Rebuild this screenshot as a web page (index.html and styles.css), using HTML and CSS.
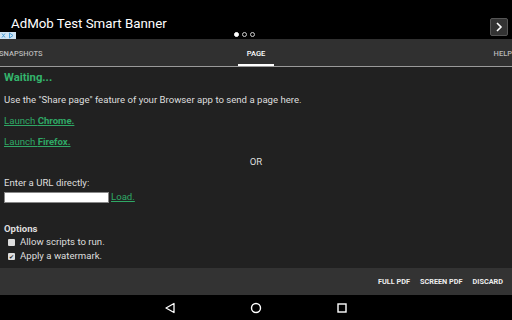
FILE: index.html
```html
<!DOCTYPE html>
<html lang="en">
<head>
  <meta charset="UTF-8">
  <title>Page to PDF</title>
  <link rel="stylesheet" href="styles.css">
</head>
<body>
  <div class="screen">
    <!-- Ad banner -->
    <div class="banner">
      <div class="banner-title">AdMob Test Smart Banner</div>
      <div class="ad-badge">
        <svg width="16" height="7" viewBox="0 0 16 7">
          <rect x="0" y="0" width="16" height="7" fill="#cfe3f3"/>
          <path d="M2 1.5 L5 5.5 M5 1.5 L2 5.5" stroke="#4a9fd8" stroke-width="1"/>
          <path d="M9.5 1 L13 3.5 L9.5 6 Z" fill="none" stroke="#4a9fd8" stroke-width="1"/>
        </svg>
      </div>
      <div class="dots">
        <span class="dot on"></span><span class="dot"></span><span class="dot"></span>
      </div>
      <div class="next-btn">
        <svg width="8" height="10" viewBox="0 0 8 10">
          <path d="M2 1 L6 5 L2 9" fill="none" stroke="#fff" stroke-width="1.6"/>
        </svg>
      </div>
    </div>

    <!-- Tabs -->
    <div class="tabs">
      <div class="tab tab-left">SNAPSHOTS</div>
      <div class="tab active">PAGE</div>
      <div class="tab tab-right">HELP</div>
    </div>

    <!-- Page content -->
    <div class="content">
      <div class="waiting">Waiting...</div>
      <p class="first">Use the "Share page" feature of your Browser app to send a page here.</p>
      <p><a href="#" class="link">Launch <b>Chrome.</b></a></p>
      <p><a href="#" class="link">Launch <b>Firefox.</b></a></p>
      <p class="or">OR</p>
      <div class="url-block">
        <div>Enter a URL directly:</div>
        <div class="url-row">
          <div class="url-input"></div>
          <a href="#" class="link">Load.</a>
        </div>
      </div>
      <div class="options">
        <div class="options-title">Options</div>
        <label class="opt"><span class="box"></span>Allow scripts to run.</label>
        <label class="opt"><span class="box checked">&#10004;</span>Apply a watermark.</label>
      </div>
    </div>

    <!-- Actions -->
    <div class="actions">
      <span class="action">FULL PDF</span>
      <span class="action">SCREEN PDF</span>
      <span class="action">DISCARD</span>
    </div>

    <!-- System nav -->
    <div class="navbar">
      <svg width="12" height="12" viewBox="0 0 12 12"><path d="M10 1.5 L10 10.5 L2 6 Z" fill="none" stroke="#fff" stroke-width="1.3" stroke-linejoin="round"/></svg>
      <svg width="12" height="12" viewBox="0 0 12 12"><circle cx="6" cy="6" r="4.5" fill="none" stroke="#fff" stroke-width="1.4"/></svg>
      <svg width="12" height="12" viewBox="0 0 12 12"><rect x="2" y="2" width="8" height="8" fill="none" stroke="#fff" stroke-width="1.4"/></svg>
    </div>
  </div>
</body>
</html>
```

FILE: styles.css
```css
:root {
  --green: #34b46c;
  --link: #2fa865;
  --text: #dedede;
}

body {
  margin: 0;
  background: #000;
  font-family: Roboto, "Liberation Sans", sans-serif;
  color: var(--text);
}

.screen {
  width: 512px;
  height: 320px;
  display: flex;
  flex-direction: column;
  overflow: hidden;
}

.banner {
  position: relative;
  height: 39px;
  background: #000;
  flex: none;
}

.banner-title {
  position: absolute;
  left: 11px;
  top: 16px;
  font-size: 13.3px;
  line-height: 16px;
  color: #fff;
}

.ad-badge {
  position: absolute;
  left: 0;
  top: 32px;
  line-height: 0;
}

.dots {
  position: absolute;
  left: 234px;
  top: 32px;
  display: flex;
  gap: 3px;
}

.dot {
  width: 3px;
  height: 3px;
  border: 1px solid #ccc;
  border-radius: 50%;
}

.dot.on {
  background: #fff;
  border-color: #fff;
}

.next-btn {
  position: absolute;
  left: 490px;
  top: 18px;
  width: 16px;
  height: 16px;
  background: #333;
  border: 1px solid #555;
  border-radius: 2px;
  display: flex;
  align-items: center;
  justify-content: center;
}

.tabs {
  height: 27px;
  background: #303030;
  border-bottom: 1px solid #9a9a9a;
  flex: none;
  position: relative;
}

.tab {
  font-size: 7.5px;
  line-height: 9px;
  font-weight: 500;
  color: #b8b8b8;
  position: absolute;
  top: 10px;
}

.tab-left { left: -1px; }
.tab-right { right: 0; }

.tab.active {
  color: #fff;
  left: 238px;
  width: 36px;
  text-align: center;
  height: 15px;
  border-bottom: 2px solid #fff;
}

.content {
  flex: 1;
  min-height: 0;
  overflow: hidden;
  background: #212121;
  padding: 4px 4px 0;
  font-size: 9.6px;
}

.waiting {
  color: var(--green);
  font-weight: 700;
  font-size: 11.3px;
  line-height: 13px;
}

p {
  margin: 9px 0 0;
  line-height: 12px;
}

p.first {
  margin-top: 10px;
}

.link {
  color: var(--link);
  text-decoration: underline;
}

.link b {
  font-weight: 700;
}

.or {
  text-align: center;
  margin-top: 8px;
}

.url-block {
  margin-top: 9px;
  line-height: 12px;
}

.url-row {
  display: flex;
  align-items: center;
  gap: 2px;
  margin-top: 2px;
}

.url-input {
  width: 103px;
  height: 9px;
  background: #fff;
  border: 1px solid #888;
}

.options {
  margin-top: 20px;
}

.options-title {
  font-weight: 700;
  line-height: 12px;
}

.opt {
  display: flex;
  align-items: center;
  gap: 5px;
  margin-left: 4px;
  line-height: 14px;
}

.box {
  width: 7px;
  height: 7px;
  background: #ddd;
  border-radius: 1px;
  font-size: 6px;
  line-height: 7px;
  text-align: center;
  color: #222;
}

.actions {
  height: 27px;
  background: #333;
  flex: none;
  display: flex;
  justify-content: flex-end;
  align-items: center;
  gap: 10px;
  padding-right: 9px;
}

.action {
  font-size: 7.3px;
  font-weight: 700;
  color: #eee;
}

.navbar {
  height: 25px;
  background: #000;
  flex: none;
  display: flex;
  justify-content: center;
  align-items: center;
  gap: 74px;
}
```
